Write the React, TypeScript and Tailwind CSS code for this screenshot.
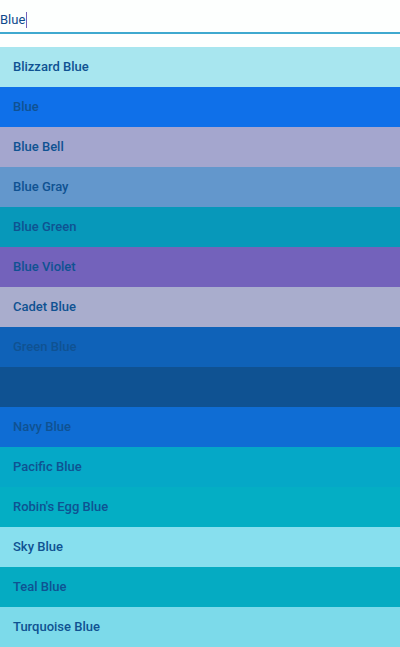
import { useState } from "react";

const colors = [
  { name: "Blizzard Blue", bg: "bg-[#a8e6ef]" },
  { name: "Blue", bg: "bg-[#0f70e9]" },
  { name: "Blue Bell", bg: "bg-[#a4a6ce]" },
  { name: "Blue Gray", bg: "bg-[#6397cc]" },
  { name: "Blue Green", bg: "bg-[#0798ba]" },
  { name: "Blue Violet", bg: "bg-[#7362bb]" },
  { name: "Cadet Blue", bg: "bg-[#a9adcd]" },
  { name: "Green Blue", bg: "bg-[#0f62b8]" },
  { name: "Midnight Blue", bg: "bg-[#0f5292]" },
  { name: "Navy Blue", bg: "bg-[#0f6dd4]" },
  { name: "Pacific Blue", bg: "bg-[#05a8c7]" },
  { name: "Robin's Egg Blue", bg: "bg-[#04aec4]" },
  { name: "Sky Blue", bg: "bg-[#87dfee]" },
  { name: "Teal Blue", bg: "bg-[#05abc2]" },
  { name: "Turquoise Blue", bg: "bg-[#7cdaea]" },
];

function SearchField({ value, onChange }: { value: string; onChange: (value: string) => void }) {
  return (
    <div className="relative border-b-2 border-[#3fa9cf] pt-2">
      <input
        type="text"
        aria-label="Search colors"
        value={value}
        onChange={(event) => onChange(event.target.value)}
        className="block h-6 w-full bg-transparent text-[13px] leading-6 text-[#0f4a8c] caret-transparent outline-none"
      />
      <span className="absolute left-[26px] top-3 h-4 w-px bg-[#7362bb]" />
    </div>
  );
}

export default function App() {
  const [query, setQuery] = useState("Blue");
  const matches = colors.filter((color) => color.name.toLowerCase().includes(query.toLowerCase()));

  return (
    <main className="bg-[#fdfffe] font-['Roboto',sans-serif]">
      <SearchField value={query} onChange={setQuery} />
      <ul className="pt-[13px]">
        {matches.map((color) => (
          <li key={color.name}>
            <button
              type="button"
              onClick={() => setQuery(color.name)}
              className={`block h-10 w-full px-[13px] text-left text-[13px] font-medium leading-5 text-[#0f5292] ${color.bg}`}
            >
              {color.name}
            </button>
          </li>
        ))}
      </ul>
    </main>
  );
}
